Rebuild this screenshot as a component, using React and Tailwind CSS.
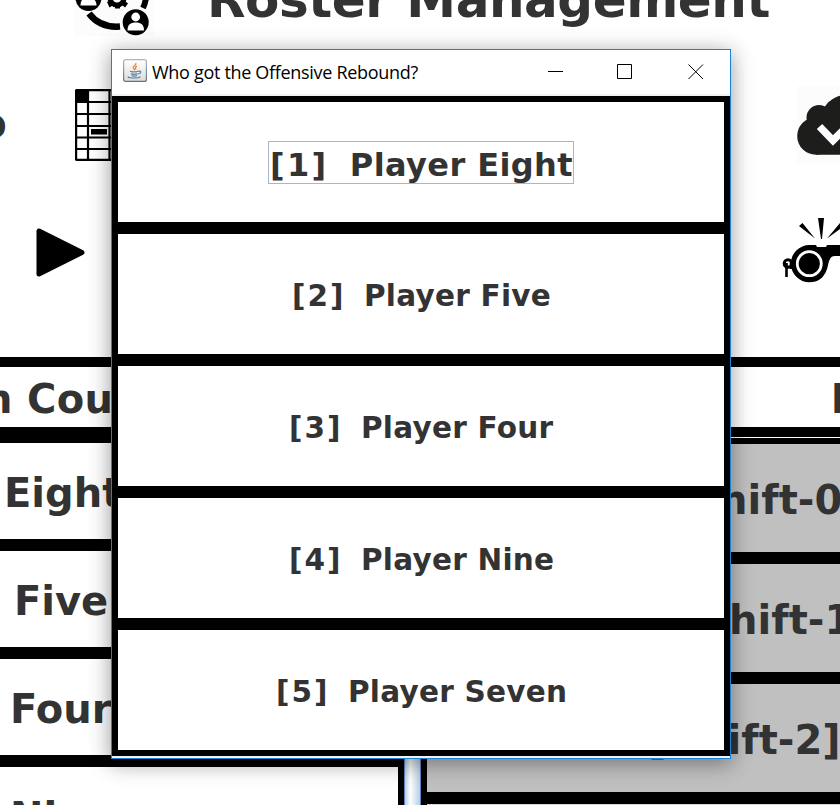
import React from 'react';

const players = [
  { key: '[2]', name: 'Player Five', pad: 'pl-[174px]' },
  { key: '[3]', name: 'Player Four', pad: 'pl-[171px]' },
  { key: '[4]', name: 'Player Nine', pad: 'pl-[171px]' },
  { key: '[5]', name: 'Player Seven', pad: 'pl-[158px]' },
];

const onCourt = [
  { name: 'Eight', pad: 'pl-[4px]' },
  { name: 'Five', pad: 'pl-[14px]' },
  { name: 'Four', pad: 'pl-[10px]' },
  { name: 'Nine', pad: 'pl-[10px]' },
];

const shifts = [
  { name: 'Shift-0]', pad: 'pl-[241px]' },
  { name: 'Shift-1]', pad: 'pl-[251px]' },
  { name: 'Shift-2]', pad: 'pl-[221px]' },
];

function RosterIcon() {
  return (
    <svg className="block" width="80" height="36" viewBox="74 0 80 36">
      <path d="M89 13.500Q100 28 120 26.500" fill="none" stroke="#000" strokeWidth="6.500" />
      <path d="M143 8Q145 4 146 -2" fill="none" stroke="#000" strokeWidth="6" />
      <circle cx="88.500" cy="-2" r="13" />
      <path d="M80.500 5.500C80.500 -1 84 -2 88 -2s8.500 1 8.500 7.500z" fill="#fff" />
      <circle cx="135.700" cy="22.300" r="13" />
      <circle cx="135.700" cy="17" r="4.400" fill="#fff" />
      <path d="M127.500 30.500c0-6 3-8 8.200-8s8.300 2 8.300 8z" fill="#fff" />
      <circle cx="117" cy="-2" r="7" fill="none" stroke="#000" strokeWidth="5" />
      <path d="M115 3h5v5.500h-5zM107 2l4-2 2.500 5-4 2.500zM122 5l3-4 3 2.500-3 4z" />
    </svg>
  );
}

function SheetIcon() {
  return (
    <svg className="block" width="70" height="72" viewBox="0 0 70 72">
      <rect x="1" y="1" width="68" height="70" rx="1.500" fill="#fff" stroke="#000" strokeWidth="2.400" />
      <path d="M1 1h13v12H1z" />
      <path d="M13 1v70M34.500 1v70M1 13h68M1 25h68M1 37h68M1 48.500h68M1 60h68" stroke="#000" strokeWidth="2.200" />
      <path d="M16 40h16v5.500H16z" />
    </svg>
  );
}

function CloudIcon() {
  return (
    <svg className="block" width="43" height="80" viewBox="797 86 43 80">
      <path d="M797 86h43v78h-43z" fill="#fcfcfc" />
      <g fill="#1d1d1b">
        <circle cx="816" cy="136" r="18.800" />
        <circle cx="819" cy="117.500" r="12.500" />
        <circle cx="846" cy="120" r="25" />
        <path d="M816 115h26v39.800h-26z" />
      </g>
      <path d="M819.500 126.500l13.500 14 14-14" fill="none" stroke="#fff" strokeWidth="7.500" />
    </svg>
  );
}

function WhistleIcon() {
  return (
    <svg className="block" width="58" height="66" viewBox="782 217 58 66">
      <path d="M818 218h6l-2 21h-1zM799 226l3.500-3L815 238.500zM827 238.500l13-15.500v6z" />
      <path d="M809 245h7l1 2h9l1-2h13v11h-5c-6 0-6 6-8 13-3 9-9 13.300-17.500 13.300a18.600 18.600 0 0 1 0-37.300z" />
      <circle cx="809.300" cy="263.700" r="12" fill="#000" stroke="#fff" strokeWidth="2.800" />
      <circle cx="788" cy="263.500" r="3.800" fill="none" stroke="#000" strokeWidth="3" />
      <path d="M786.500 263v14M791 261v8" stroke="#000" strokeWidth="2.600" />
    </svg>
  );
}

function JavaIcon() {
  return (
    <svg className="block" width="24" height="23" viewBox="0 0 24 23">
      <defs>
        <linearGradient id="tile" x1="0" y1="0" x2="0" y2="1">
          <stop offset="0" stopColor="#fff" />
          <stop offset="1" stopColor="#dcdcdc" />
        </linearGradient>
        <linearGradient id="rim" x1="0" y1="0" x2="0" y2="1">
          <stop offset="0" stopColor="#a5b8ca" />
          <stop offset="1" stopColor="#587691" />
        </linearGradient>
      </defs>
      <rect x="0.600" y="0.600" width="22.800" height="21.800" rx="2" fill="url(#tile)" stroke="url(#rim)" strokeWidth="1.200" />
      <path d="M12.800 4c1 2.200-3.300 3-2.500 5 .3.900 1.500 1.300 1.500 2.300M14 7.200c-2.500 1-1.500 2.200-1.200 3.500" fill="none" stroke="#ee8a3c" strokeWidth="1.300" />
      <path d="M7 12.200c2 1 6.500.8 8.500 0M8 14.600c2 .8 5 .7 6.500 0M8.500 16.500c1.500.7 4 .7 5.500 0M15.500 12.200c3.500-.8 2.500 2.500-.3 2.800M5.500 17.500c-2 1.700 9 2.200 12 .2" fill="none" stroke="#577c9c" strokeWidth="1.200" />
    </svg>
  );
}

function Background() {
  return (
    <div className="flex h-[805px] w-[840px] flex-col overflow-hidden bg-white">
      <div className="flex h-[86px] shrink-0 items-start overflow-hidden pl-[74px]">
        <div className="bg-[#fcfcfc]"><RosterIcon /></div>
        <h1 className="-mt-[30px] ml-[53px] text-[50px] leading-[60px] font-bold tracking-[-0.45px]">Roster Management</h1>
      </div>
      <div className="flex h-[131px] shrink-0 items-start">
        <div className="-ml-[22px] w-[97px] pt-[14px] text-[42px] leading-[47px] font-bold">o</div>
        <div className="pt-[3px]"><SheetIcon /></div>
        <div className="ml-auto"><CloudIcon /></div>
      </div>
      <div className="flex h-[140px] shrink-0 items-start justify-between pl-[36px]">
        <svg className="mt-[11px] block" width="49" height="49" viewBox="0 0 49 49">
          <path d="M3 3v43L46 24.500z" stroke="#000" strokeWidth="5" strokeLinejoin="round" />
        </svg>
        <WhistleIcon />
      </div>
      <div className="flex h-[80px] shrink-0 items-center justify-between border-y-[10px] border-black bg-white pt-[3px] text-[40px] leading-none font-bold">
        <span className="-ml-[16px] tracking-[0.3px]">n Count</span>
        <span className="-mr-[18px]">F</span>
      </div>
      <div className="flex h-[368px] shrink-0">
        <div className="w-[404px] overflow-hidden">
          {onCourt.map((p) => (
            <div key={p.name} className="flex h-[108px] items-center border-y-[6px] border-r-[6px] border-black bg-white pt-[4px] text-[40px] leading-none font-bold">
              <span className={p.pad}>{p.name}</span>
            </div>
          ))}
        </div>
        <div className="w-[17px] border-x border-[#6382bf] bg-linear-to-r from-[#b8cfe5] via-white via-35% to-[#b8cfe5] shadow-[1px_0_0_#fff]" />
        <div className="w-[419px] overflow-hidden pt-px">
          {shifts.map((s) => (
            <div key={s.name} className="flex h-[120px] items-center border-y-[6px] border-l-[6px] border-black bg-[#c0c0c0] pt-[3px] text-[40px] leading-none font-bold whitespace-nowrap">
              <span className={s.pad}>[<span className="ml-[4px]">{s.name}</span></span>
            </div>
          ))}
          <div className="h-[120px] border-y-[6px] border-l-[6px] border-black bg-[#d8d8d8]" />
        </div>
      </div>
    </div>
  );
}

function Dialog() {
  return (
    <div className="absolute top-[49px] left-[111px] flex h-[710px] w-[620px] flex-col border border-[#1883d7] bg-[#f0f0f0] shadow-[0_4px_20px_1px_rgba(0,0,0,0.38)]">
      <div className="mb-[2px] flex h-[44px] shrink-0 items-center bg-white pl-[11px]">
        <div className="-mt-[3px]"><JavaIcon /></div>
        <span className="ml-[5px] font-['Open_Sans',sans-serif] text-[18px] leading-none tracking-[-0.31px] whitespace-nowrap text-black">Who got the Offensive Rebound?</span>
        <svg className="-mt-px mr-[25px] ml-auto block" width="158" height="17" viewBox="0 0 158 17" fill="none" stroke="#000">
          <path d="M1 8.500h15" />
          <path d="M70.500 1.500h14v14h-14z" />
          <path d="M141.500 1.500l14.500 14.500M156 1.500L141.500 16" />
        </svg>
      </div>
      <div className="flex h-[132px] shrink-0 items-center border-[6px] border-black bg-white pt-px pl-[150px] text-[32px] font-bold">
        <div className="flex h-[43px] w-[306px] items-center border border-[#a3b8cc] pt-[4px] leading-none whitespace-nowrap">
          <span className="w-[82px] pl-px tracking-[2.3px]">[1]</span>
          <span className="tracking-[0.4px]">Player Eight</span>
        </div>
      </div>
      {players.map((p) => (
        <div key={p.key} className="flex h-[132px] shrink-0 items-center border-[6px] border-black bg-white pt-[6px] text-[29.5px] leading-none font-bold whitespace-nowrap">
          <div className={p.pad}>
            <span className="inline-block w-[72px] tracking-[2px]">{p.key}</span>
            <span className="tracking-[0.25px]">{p.name}</span>
          </div>
        </div>
      ))}
    </div>
  );
}

export default function App() {
  return (
    <main className="relative h-[805px] w-[840px] overflow-hidden font-['DejaVu_Sans',sans-serif] text-[#333333]">
      <Background />
      <Dialog />
    </main>
  );
}
